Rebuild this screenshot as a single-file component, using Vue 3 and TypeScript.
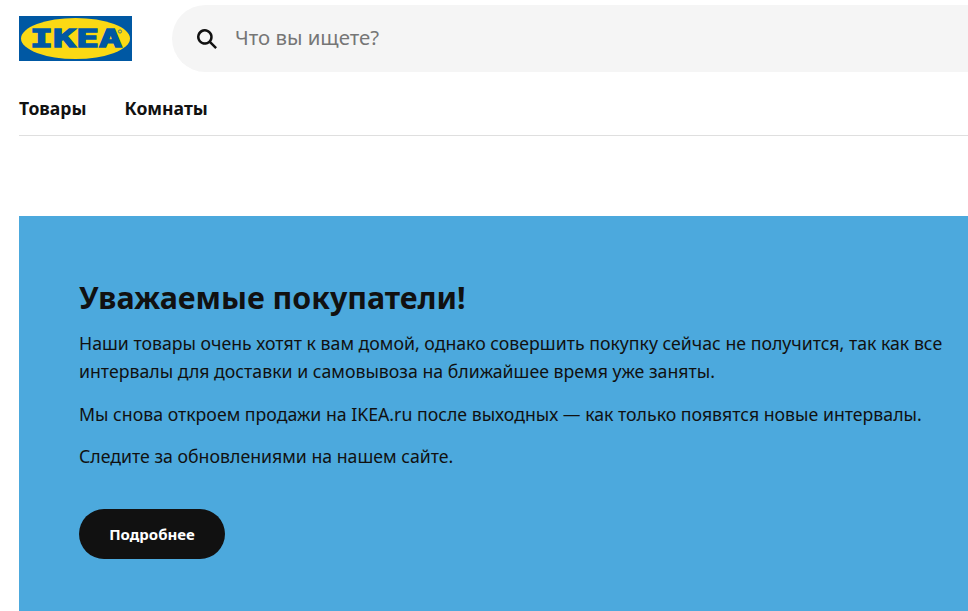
<script setup lang="ts">
const navItems: string[] = ['Товары', 'Комнаты']
</script>

<template>
  <div class="page">
    <header class="top">
      <a class="logo" aria-label="IKEA">
        <svg width="113" height="45" viewBox="0 0 113 45">
          <rect width="113" height="45" fill="#0058a3" />
          <ellipse cx="56.5" cy="22.5" rx="54.5" ry="20.5" fill="#fbd914" />
          <text x="57" y="31" text-anchor="middle" class="logo-text" textLength="92" lengthAdjust="spacingAndGlyphs">IKEA</text>
          <circle cx="101" cy="15.5" r="1.6" fill="#fbd914" stroke="#0058a3" stroke-width="0.7" />
        </svg>
      </a>
      <div class="search">
        <svg class="search-icon" width="30" height="30" viewBox="0 0 24 24">
          <path d="M13.98 15.395a6.294 6.294 0 111.414-1.414l4.602 4.601-1.414 1.414-4.602-4.601zm.607-5.101a4.294 4.294 0 11-8.587 0 4.294 4.294 0 018.587 0z" fill="#111" fill-rule="evenodd" />
        </svg>
        <span class="placeholder">Что вы ищете?</span>
      </div>
    </header>
    <nav class="nav">
      <a v-for="item in navItems" :key="item" class="nav-item">{{ item }}</a>
    </nav>
    <section class="banner">
      <h1>Уважаемые покупатели!</h1>
      <p>Наши товары очень хотят к вам домой, однако совершить покупку сейчас не получится, так как все интервалы для доставки и самовывоза на ближайшее время уже заняты.</p>
      <p>Мы снова откроем продажи на IKEA.ru после выходных — как только появятся новые интервалы.</p>
      <p>Следите за обновлениями на нашем сайте.</p>
      <a class="btn">Подробнее</a>
    </section>
  </div>
</template>

<style>
html, body { margin: 0; overflow: hidden; background: #fff; }
</style>

<style scoped>
.page {
  width: 968px;
  height: 611px;
  overflow: hidden;
  font-family: "Noto Sans", "Open Sans", sans-serif;
  color: #111;
  padding-left: 19px;
  box-sizing: border-box;
}
.top {
  display: flex;
  align-items: flex-start;
  height: 72px;
  padding-top: 5px;
  box-sizing: border-box;
}
.logo {
  display: block;
  width: 113px;
  height: 45px;
  margin-top: 11px;
  flex: none;
}
.logo svg { display: block; }
.logo-text {
  font-family: "DejaVu Sans Mono", monospace;
  font-weight: 700;
  font-size: 24.5px;
  fill: #0058a3;
  stroke: #0058a3;
  stroke-width: 1.3;
}
.search {
  margin-left: 40px;
  flex: 1;
  height: 67px;
  background: #f5f5f5;
  border-radius: 34px 0 0 34px;
  display: flex;
  align-items: center;
  padding-left: 20px;
  padding-bottom: 3px;
  box-sizing: border-box;
}
.search-icon { flex: none; margin-top: 3px; }
.placeholder {
  margin-left: 13px;
  font-size: 20.4px;
  color: #767676;
}
.nav {
  display: flex;
  gap: 38px;
  height: 64px;
  padding-top: 9px;
  align-items: center;
  border-bottom: 1px solid #dfdfdf;
  font-size: 17.6px;
  font-weight: 700;
  box-sizing: border-box;
}
.nav-item { display: block; }
.banner {
  margin-top: 80px;
  height: 395px;
  background: #4ca9dd;
  padding: 61px 0 0 60px;
  box-sizing: border-box;
}
h1 {
  margin: 0 0 10px;
  font-size: 30.4px;
  line-height: 42px;
  font-weight: 700;
}
p {
  margin: 0 0 14.5px;
  font-size: 17.72px;
  line-height: 28px;
}
.btn {
  display: inline-flex;
  align-items: center;
  justify-content: center;
  margin-top: 24px;
  width: 146px;
  height: 50px;
  border-radius: 25px;
  background: #111;
  color: #fff;
  font-size: 15px;
  font-weight: 700;
}
</style>
